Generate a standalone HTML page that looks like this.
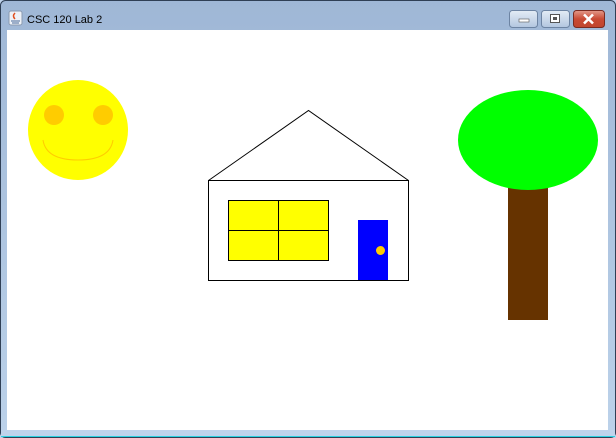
<!DOCTYPE html>
<html><head><meta charset="utf-8"><style>
html,body{margin:0;padding:0;width:616px;height:438px;overflow:hidden;background:#fff}
</style></head><body>
<svg width="616" height="438" viewBox="0 0 616 438" xmlns="http://www.w3.org/2000/svg">
<defs>
<linearGradient id="tb" x1="0" y1="0" x2="0" y2="1">
<stop offset="0" stop-color="#9fb7d6"/><stop offset="1" stop-color="#bcd2ea"/></linearGradient>
<linearGradient id="bt" x1="0" y1="0" x2="0" y2="1">
<stop offset="0" stop-color="#e4ecf6"/><stop offset="1" stop-color="#b2c6df"/></linearGradient>
<linearGradient id="rd" x1="0" y1="0" x2="0" y2="1">
<stop offset="0" stop-color="#e39a8a"/><stop offset="0.5" stop-color="#c94a34"/><stop offset="1" stop-color="#c0452e"/></linearGradient>
</defs>
<rect x="0" y="0" width="616" height="438" fill="#bfd3ec"/>
<rect x="0.5" y="0.5" width="615" height="437" rx="5" fill="url(#tb)" stroke="#2f3f55"/>
<rect x="1" y="430" width="614" height="7" fill="#bfd3ec"/>
<rect x="1" y="436" width="614" height="1" fill="#2ad0e0"/>
<rect x="7" y="30" width="601" height="400" fill="#fff"/>
<!-- icon -->
<rect x="9" y="11" width="13" height="14" rx="2" fill="#eef2f8" stroke="#8a9ab0"/>
<path d="M15 13 q-3 3 0 6" stroke="#e05020" fill="none" stroke-width="1.5"/>
<path d="M11 21 h9 M12 23 h7" stroke="#4a6a9a"/>
<text x="27" y="23" font-family="Liberation Sans, sans-serif" font-size="11" fill="#000">CSC 120 Lab 2</text>
<!-- buttons -->
<rect x="509.5" y="10.5" width="28" height="17" rx="3" fill="url(#bt)" stroke="#6d84a3"/>
<rect x="519" y="19" width="10" height="3" fill="#fff" stroke="#555" stroke-width="0.6"/>
<rect x="541.5" y="10.5" width="28" height="17" rx="3" fill="url(#bt)" stroke="#6d84a3"/>
<rect x="550.5" y="14.5" width="9" height="8" fill="#fff" stroke="#555"/>
<rect x="553" y="17" width="4" height="3" fill="#555"/>
<rect x="573.5" y="10.5" width="31" height="17" rx="3" fill="url(#rd)" stroke="#7a2a20"/>
<path d="M584 14.5 l9 9 M593 14.5 l-9 9" stroke="#fff" stroke-width="2.5"/>
<!-- sun -->
<circle cx="78" cy="130" r="50" fill="#ffff00"/>
<circle cx="54" cy="115" r="10" fill="#ffcc00"/>
<circle cx="103" cy="115" r="10" fill="#ffcc00"/>
<path d="M43 140 Q46 160 78 160 Q110 160 113 140" fill="none" stroke="#ffcc00" stroke-width="1"/>
<!-- house -->
<rect x="208.5" y="180.5" width="200" height="100" fill="#fff" stroke="#000"/>
<path d="M208.5 180.5 L308.5 110.5 L408.5 180.5" fill="none" stroke="#000"/>
<rect x="228.5" y="200.5" width="100" height="60" fill="#ffff00" stroke="#000"/>
<path d="M278.5 200.5 V260.5 M228.5 230.5 H328.5" stroke="#000"/>
<rect x="358" y="220" width="30" height="60" fill="#0000ff"/>
<circle cx="380.5" cy="250.5" r="4.5" fill="#ffcc00"/>
<!-- tree -->
<rect x="508" y="185" width="40" height="135" fill="#663300"/>
<ellipse cx="528" cy="140" rx="70" ry="50" fill="#00ff00"/>
</svg>
</body></html>
